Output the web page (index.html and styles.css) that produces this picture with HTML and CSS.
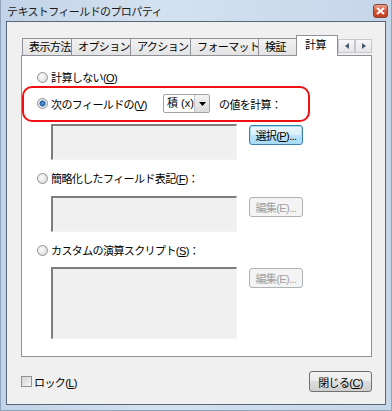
FILE: index.html
```html
<!DOCTYPE html>
<html lang="ja">
<head>
	<meta charset=utf-8>
	<link rel="stylesheet" href="styles.css">
	<title>テキストフィールドのプロパティ</title>
</head>
<body>
<div class=window>
	<div class=titlebar>
		<span class=title>テキストフィールドのプロパティ</span>
		<span class=close><svg width="9" height="8" viewBox="0 0 9 8"><path d="M1 1 L8 7 M8 1 L1 7" stroke="#fff" stroke-width="2"/></svg></span>
	</div>
	<div class=client>
		<div class=tabs>
			<div class=tab>表示方法</div>
			<div class=tab>オプション</div>
			<div class=tab>アクション</div>
			<div class=tab>フォーマット</div>
			<div class=tab>検証</div>
			<div class="tab sel">計算</div>
			<div class=arrows>
				<span class=arr><svg width="4" height="6" viewBox="0 0 4 6"><path d="M4 0 L0 3 L4 6Z" fill="#4a5a70"/></svg></span>
				<span class=arr><svg width="4" height="6" viewBox="0 0 4 6"><path d="M0 0 L4 3 L0 6Z" fill="#4a5a70"/></svg></span>
			</div>
		</div>
		<div class=panel>
			<div class="opt first"><span class=radio></span><span>計算しない(<u>O</u>)</span></div>
			<div class=mark>
				<div class=opt><span class="radio on"></span><span>次のフィールドの(<u>V</u>)</span></div>
				<div class=combo><span class=val>積 (x)</span><span class=drop><svg width="7" height="4" viewBox="0 0 7 4"><path d="M0 0 L7 0 L3.5 4Z" fill="#000"/></svg></span></div>
				<span class=tail>の値を計算：</span>
			</div>
			<div class=field>
				<div class="box"></div>
				<button class="btn focus">選択(<u>P</u>)...</button>
			</div>
			<div class="opt gap"><span class=radio></span><span>簡略化したフィールド表記(<u>F</u>)：</span></div>
			<div class="field gap">
				<div class="box"></div>
				<button class="btn off">編集(E)...</button>
			</div>
			<div class="opt gap"><span class=radio></span><span>カスタムの演算スクリプト(<u>S</u>)：</span></div>
			<div class="field gap2">
				<div class="box tall"></div>
				<button class="btn off">編集(E)...</button>
			</div>
		</div>
		<div class=bottom>
			<label class=lock><span class=check></span><span>ロック(<u>L</u>)</span></label>
			<button class="btn closebtn">閉じる(<u>C</u>)</button>
		</div>
	</div>
</div>
</body>
</html>
```

FILE: styles.css
```css
body {
	margin: 0;
	font-family: "Liberation Sans", "Noto Sans CJK JP", sans-serif;
	font-size: 11px;
	color: #000;
}
u {
	text-decoration: underline;
	text-underline-offset: 1px;
}
.window {
	width: 392px;
	height: 411px;
	box-sizing: border-box;
	padding: 0 5px 5px 5px;
	display: flex;
	flex-direction: column;
	background: linear-gradient(90deg, #c2d3e7, #d4e1f0 40%, #c6d6e9);
	border: 1px solid #8fa3bb;
	border-top: none;
}
.titlebar {
	height: 21px;
	display: flex;
	align-items: center;
	letter-spacing: -0.6px;
}
.title {
	padding-left: 1px;
	color: #1b1b1b;
}
.close {
	margin-left: auto;
	margin-right: -2px;
	width: 15px;
	height: 14px;
	border: 1px solid #8a4434;
	border-radius: 3px;
	box-sizing: border-box;
	background: linear-gradient(#e8a08a, #d2553a 50%, #c43d1f);
	display: flex;
	align-items: center;
	justify-content: center;
}
.client {
	flex: 1;
	border: 1px solid #56667a;
	background: #f0f0f0;
	padding: 14px 13px 0 14px;
	display: flex;
	flex-direction: column;
}
.tabs {
	display: flex;
	align-items: flex-end;
	height: 19px;
	padding-left: 1px;
	letter-spacing: -0.6px;
	white-space: nowrap;
}
.tab {
	flex: none;
	height: 17px;
	box-sizing: border-box;
	border: 1px solid #8e9198;
	border-bottom: none;
	margin-right: -1px;
	padding-left: 6px;
	line-height: 16px;
	background: linear-gradient(#f2f2f2, #e3e3e3);
}
.tab:nth-child(1) { width: 50px; }
.tab:nth-child(2) { width: 60px; }
.tab:nth-child(3) { width: 61px; }
.tab:nth-child(4) { width: 69px; }
.tab:nth-child(5) { width: 39px; }
.tab.sel {
	width: 42px;
	height: 21px;
	margin-bottom: -1px;
	background: #fff;
	padding-left: 8px;
	line-height: 18px;
	position: relative;
	z-index: 1;
}
.arrows {
	margin-left: auto;
	margin-bottom: 2px;
	display: flex;
}
.arr {
	width: 17px;
	height: 14px;
	box-sizing: border-box;
	border: 1px solid #c5c8cc;
	background: linear-gradient(#f7f7f7, #e6e6e6);
	display: flex;
	align-items: center;
	justify-content: center;
}
.panel {
	height: 302px;
	box-sizing: border-box;
	border: 1px solid #8e9198;
	background: #fff;
	display: flex;
	flex-direction: column;
	letter-spacing: -0.6px;
}
.opt {
	height: 16px;
	display: flex;
	align-items: center;
	gap: 3px;
	padding-left: 15px;
	white-space: nowrap;
}
.opt.first {
	margin-top: 13px;
}
.opt.gap {
	margin-top: 10px;
}
.radio {
	width: 11px;
	height: 11px;
	box-sizing: border-box;
	border-radius: 50%;
	border: 1px solid #8f9296;
	background: radial-gradient(circle at 40% 40%, #fbfbfb, #d5d5d5);
	flex: none;
}
.radio.on {
	background: radial-gradient(circle, #5fa4dc 0, #1d5f9f 2.5px, #e8eef4 3.5px, #d2d6da);
}
.mark {
	margin-top: 1px;
	width: 288px;
	height: 36px;
	box-sizing: border-box;
	border: 2px solid #ee1111;
	border-radius: 10px;
	display: flex;
	align-items: center;
	padding-bottom: 1px;
}
.mark .opt {
	padding-left: 13px;
	width: 139px;
	box-sizing: border-box;
}
.combo {
	width: 47px;
	height: 19px;
	box-sizing: border-box;
	border: 1px solid #a0a4aa;
	border-radius: 2px;
	display: flex;
	background: #fff;
}
.val {
	flex: 1;
	padding-left: 3px;
	line-height: 17px;
	letter-spacing: 0;
	white-space: nowrap;
}
.drop {
	width: 14px;
	border-left: 1px solid #c4c7cc;
	background: linear-gradient(#f3f3f3, #dcdcdc);
	display: flex;
	align-items: center;
	justify-content: center;
}
.tail {
	margin-left: 9px;
}
.field {
	display: flex;
	align-items: flex-start;
	gap: 12px;
	padding-left: 29px;
	margin-top: 2px;
}
.field.gap {
	margin-top: 10px;
}
.field.gap2 {
	margin-top: 9px;
}
.box {
	width: 186px;
	height: 36px;
	box-sizing: border-box;
	background: #f0f0f0;
	border-top: 2px solid #7d7d7d;
	border-left: 2px solid #7d7d7d;
	border-right: 1px solid #f4f4f4;
	border-bottom: 1px solid #f4f4f4;
}
.box.tall {
	height: 72px;
}
.btn {
	font: inherit;
	letter-spacing: -0.6px;
	margin-top: 1px;
	width: 54px;
	height: 20px;
	padding: 0;
	box-sizing: border-box;
	border: 1px solid #707070;
	border-radius: 3px;
	background: linear-gradient(#f2f2f2, #ebebeb 50%, #dddddd 50%, #cfcfcf);
	color: #000;
	white-space: nowrap;
}
.btn.focus {
	border-color: #3c7fb1;
	box-shadow: inset 0 0 0 1px #a8dcf5;
	background: linear-gradient(#eaf6fd, #d9f0fc 50%, #bee6fd 50%, #a7d9f5);
}
.btn.off {
	border-color: #adb2b5;
	background: #f4f4f4;
	color: #a0a0a0;
}
.bottom {
	margin-top: 14px;
	height: 21px;
	display: flex;
	align-items: center;
	letter-spacing: -0.6px;
}
.lock {
	display: flex;
	align-items: center;
	gap: 2px;
}
.check {
	width: 11px;
	height: 11px;
	box-sizing: border-box;
	border: 1px solid #8f9296;
	background: linear-gradient(135deg, #d4d4d4, #f6f6f6);
}
.closebtn {
	margin: 0 0 0 auto;
	width: 63px;
	height: 21px;
}
```
